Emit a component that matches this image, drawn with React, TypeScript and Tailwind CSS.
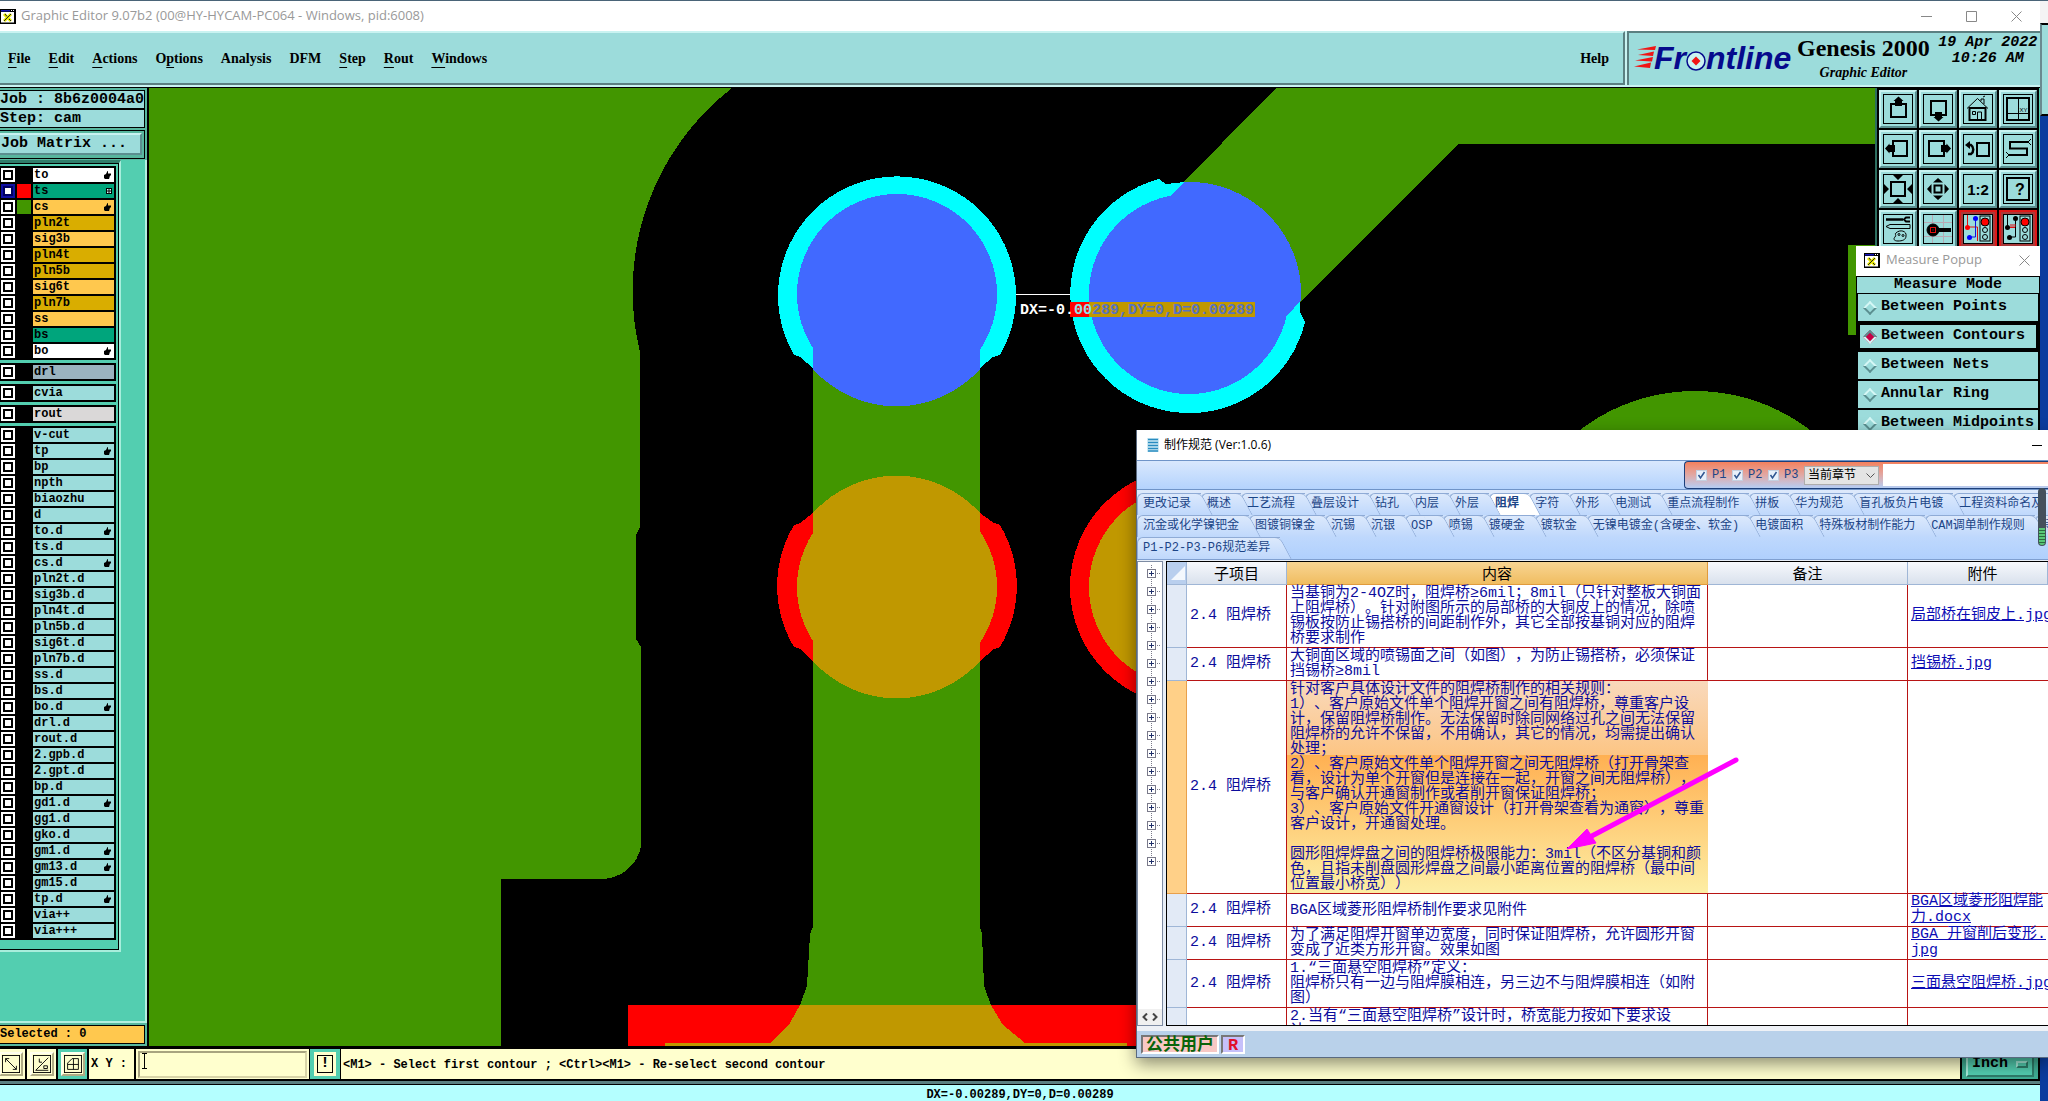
import { useState, type ReactNode } from "react"
import clsx from "clsx"

interface Layer {
  name: string
  bg?: string
  swatch?: string
  mark?: "hand" | "grid"
}

const WHITE = "bg-white"
const SOLDER = "bg-[#00a57c]"
const SIGNAL = "bg-[#ffc84e]"
const POWER = "bg-[#d9ad00]"

const LAYER_GROUPS: Layer[][] = [
  [
    { name: "to", bg: WHITE, mark: "hand" },
    { name: "ts", bg: SOLDER, swatch: "bg-[#ff0000]", mark: "grid" },
    { name: "cs", bg: SIGNAL, swatch: "bg-[#429600]", mark: "hand" },
    { name: "pln2t", bg: POWER },
    { name: "sig3b", bg: SIGNAL },
    { name: "pln4t", bg: POWER },
    { name: "pln5b", bg: POWER },
    { name: "sig6t", bg: SIGNAL },
    { name: "pln7b", bg: POWER },
    { name: "ss", bg: SIGNAL },
    { name: "bs", bg: SOLDER },
    { name: "bo", bg: WHITE, mark: "hand" },
  ],
  [{ name: "drl", bg: "bg-[#9ab3bf]" }],
  [{ name: "cvia" }],
  [{ name: "rout", bg: "bg-[#dad8d8]" }],
  [
    { name: "v-cut" },
    { name: "tp", mark: "hand" },
    { name: "bp" },
    { name: "npth" },
    { name: "biaozhu" },
    { name: "d" },
    { name: "to.d", mark: "hand" },
    { name: "ts.d" },
    { name: "cs.d", mark: "hand" },
    { name: "pln2t.d" },
    { name: "sig3b.d" },
    { name: "pln4t.d" },
    { name: "pln5b.d" },
    { name: "sig6t.d" },
    { name: "pln7b.d" },
    { name: "ss.d" },
    { name: "bs.d" },
    { name: "bo.d", mark: "hand" },
    { name: "drl.d" },
    { name: "rout.d" },
    { name: "2.gpb.d" },
    { name: "2.gpt.d" },
    { name: "bp.d" },
    { name: "gd1.d", mark: "hand" },
    { name: "gg1.d" },
    { name: "gko.d" },
    { name: "gm1.d", mark: "hand" },
    { name: "gm13.d", mark: "hand" },
    { name: "gm15.d" },
    { name: "tp.d", mark: "hand" },
    { name: "via++" },
    { name: "via+++" },
  ],
]

// [before mnemonic, mnemonic, rest]
const MENUS: [string, string, string][] = [
  ["", "F", "ile"],
  ["", "E", "dit"],
  ["", "A", "ctions"],
  ["O", "p", "tions"],
  ["Analysis", "", ""],
  ["DFM", "", ""],
  ["", "S", "tep"],
  ["", "R", "out"],
  ["", "W", "indows"],
]

const MEASURE_MODES = [
  "Between Points",
  "Between Contours",
  "Between Nets",
  "Annular Ring",
  "Between Midpoints",
]

const TAB_ROWS = [
  ["更改记录", "概述", "工艺流程", "叠层设计", "钻孔", "内层", "外层", "阻焊", "字符", "外形", "电测试", "重点流程制作", "拼板", "华为规范", "盲孔板负片电镀", "工程资料命名及"],
  ["沉金或化学镍钯金", "图镀铜镍金", "沉锡", "沉银", "OSP", "喷锡", "镀硬金", "镀软金", "无镍电镀金(含硬金、软金)", "电镀面积", "特殊板材制作能力", "CAM调单制作规则", "特"],
  ["P1-P2-P3-P6规范差异"],
]

interface SpecRow {
  height: string
  lines: string[]
  files: string[]
  selected?: boolean
}

const SPEC_ROWS: SpecRow[] = [
  {
    height: "h-[63px]",
    lines: [
      "当基铜为2-4OZ时，阻焊桥≥6mil；8mil（只针对整板大铜面",
      "上阻焊桥）。针对附图所示的局部桥的大铜皮上的情况，除喷",
      "锡板按防止锡搭桥的间距制作外，其它全部按基铜对应的阻焊",
      "桥要求制作",
    ],
    files: ["局部桥在铜皮上.jpg"],
  },
  {
    height: "h-[33px]",
    lines: ["大铜面区域的喷锡面之间（如图），为防止锡搭桥，必须保证", "挡锡桥≥8mil"],
    files: ["挡锡桥.jpg"],
  },
  {
    height: "h-[213px]",
    selected: true,
    lines: [
      "针对客户具体设计文件的阻焊桥制作的相关规则：",
      "1）、客户原始文件单个阻焊开窗之间有阻焊桥，尊重客户设",
      "计，保留阻焊桥制作。无法保留时除同网络过孔之间无法保留",
      "阻焊桥的允许不保留，不用确认，其它的情况，均需提出确认",
      "处理；",
      "2）、客户原始文件单个阻焊开窗之间无阻焊桥（打开骨架查",
      "看，设计为单个开窗但是连接在一起，开窗之间无阻焊桥），",
      "与客户确认开通窗制作或者削开窗保证阻焊桥；",
      "3）、客户原始文件开通窗设计（打开骨架查看为通窗），尊重",
      "客户设计，开通窗处理。",
      "",
      "圆形阻焊焊盘之间的阻焊桥极限能力：3mil（不区分基铜和颜",
      "色，且指未削盘圆形焊盘之间最小距离位置的阻焊桥（最中间",
      "位置最小桥宽））",
    ],
    files: [],
  },
  { height: "h-[33px]", lines: ["BGA区域菱形阻焊桥制作要求见附件"], files: ["BGA区域菱形阻焊能", "力.docx"] },
  {
    height: "h-[33px]",
    lines: ["为了满足阻焊开窗单边宽度，同时保证阻焊桥，允许圆形开窗", "变成了近类方形开窗。效果如图"],
    files: ["BGA 开窗削后变形.", "jpg"],
  },
  {
    height: "h-[48px]",
    lines: ["1.“三面悬空阻焊桥”定义：", "阻焊桥只有一边与阻焊膜相连，另三边不与阻焊膜相连（如附", "图）"],
    files: ["三面悬空阻焊桥.jpg"],
  },
  { height: "h-[33px]", lines: ["2.当有“三面悬空阻焊桥”设计时，桥宽能力按如下要求设", "计："], files: [] },
]

const MONO = "font-['Liberation_Mono',monospace]"
const SERIF = "font-['Liberation_Serif',serif]"
const UI = "font-['Open_Sans','Noto_Sans_CJK_SC',sans-serif]"
const CJK = "font-['Liberation_Mono','Noto_Sans_CJK_SC',monospace] [text-spacing-trim:space-all]"

const BEVEL =
  "border-t-[#c9f3f1] border-l-[#c9f3f1] border-r-[#5b8f90] border-b-[#5b8f90]"

function XLogo() {
  return (
    <svg className="h-[15px] w-4 shrink-0" viewBox="0 0 16 15">
      <rect width="16" height="15" fill="#000" />
      <rect x="1" y="3" width="13" height="10.500" fill="#fff" />
      <rect x="1" y="1" width="9" height="1.500" fill="#1414b4" />
      <path d="M11 1.500h1M13 1.500h1" stroke="#fff" />
      <path d="M4 5l7 7M11 5l-7 7" stroke="#e8e800" strokeWidth="3" />
      <path d="M11 5l-7 7M5 5l2 2.500M9 10l2 2" stroke="#222" />
    </svg>
  )
}

function FrontlineLogo() {
  return (
    <svg className="h-9 w-[162px] shrink-0" viewBox="0 0 162 36" role="img" aria-label="Frontline">
      <path
        d="M4 8.500L23 5L22 9zM5 14L21 10.500L20 15zM2 19.500L20 16L19 20.500zM1 25.500L18 21.500L17 27z"
        fill="#f01414"
      />
      <g fill="#060a8c" fontFamily="'Liberation Sans', sans-serif" fontWeight="700" fontStyle="italic" fontSize="32">
        <text x="21" y="28">Fr</text>
        <text x="73" y="28">ntline</text>
      </g>
      <circle cx="63" cy="20" r="9" fill="#c9f3f1" stroke="#060a8c" strokeWidth="1.500" />
      <path d="M63 15.500l4.500 4.500-4.500 4.500-4.500-4.500z" fill="#f01414" />
    </svg>
  )
}

function MenuBar() {
  return (
    <header className="flex h-[57px] shrink-0 border-b border-black bg-[#c9f3f1]">
      <nav
        className={`${SERIF} mr-[2px] flex h-[54px] flex-1 items-center border-t-2 border-r-2 border-b-2 border-t-[#c9f3f1] border-r-[#5b8081] border-b-[#5b8081] bg-[#9cdcdb] pt-0.5 pr-[5px] text-[14px] font-bold`}
      >
        {MENUS.map(([a, m, b]) => (
          <button key={a + m + b} className="px-[9px] leading-5 first:pl-2">
            {a}
            <span className="underline underline-offset-4">{m}</span>
            {b}
          </button>
        ))}
        <button className="ml-auto px-[9px] leading-5">Help</button>
      </nav>
      <div className="flex h-[54px] w-[413px] border-t-2 border-l-2 border-[#5b8081] bg-[#9cdcdb] pl-1">
        <div className="pt-2">
          <FrontlineLogo />
        </div>
        <div className={`${SERIF} flex flex-col items-center pl-0.5 font-bold`}>
          <span className="text-2xl leading-[30px]">Genesis 2000</span>
          <span className="text-[14px] leading-5 italic">Graphic Editor</span>
        </div>
        <div className={`${MONO} flex-1 pt-0.5 pl-1.5 text-center text-[15px] leading-4 font-bold whitespace-nowrap italic`}>
          19 Apr 2022
          <br />
          10:26 AM
        </div>
      </div>
    </header>
  )
}

function LayerMark({ kind }: { kind: "hand" | "grid" }) {
  if (kind === "grid") {
    return (
      <svg className="size-[6px]" viewBox="0 0 6 6">
        <rect width="6" height="6" fill="#000" />
        <path d="M1 1h1.500v1.500H1zM3.500 1H5v1.500H3.500zM1 3.500h1.500V5H1zM3.500 3.500H5V5H3.500z" fill="#dff" />
      </svg>
    )
  }
  return (
    <svg className="h-2 w-[9px]" viewBox="0 0 9 8">
      <path d="M1 4l2-1 1.500-3L5 0v2.500h3v2H7v1H6.500v1L6 8H2L1 7z" />
    </svg>
  )
}

function LayerRow({ layer, active, onToggle }: { layer: Layer; active: boolean; onToggle: () => void }) {
  return (
    <label className="flex h-[14px] items-stretch gap-0.5 pl-px">
      <input
        type="checkbox"
        checked={active}
        onChange={onToggle}
        className="size-[14px] shrink-0 appearance-none border-2 border-white bg-white shadow-[inset_0_0_0_2px_#000] checked:border-[#1010a4] checked:shadow-[inset_0_0_0_2px_#000060]"
      />
      <span className={clsx("w-[14px] shrink-0", layer.swatch)} />
      <span className={clsx("flex w-[81px] items-center justify-between pr-0.5 pl-px leading-[14px]", layer.bg ?? "bg-[#9cdcdb]")}>
        {layer.name}
        {layer.mark && <LayerMark kind={layer.mark} />}
      </span>
    </label>
  )
}

function LayerPanel() {
  const [active, setActive] = useState("ts")

  return (
    <aside className={`${MONO} flex w-[149px] shrink-0 flex-col border-r-2 border-black bg-[#53ceb0] font-bold whitespace-nowrap`}>
      <div className="bg-[#58b79f] pt-0.5 pr-0.5 text-[15px]">
        <div className="h-[19px] border border-l-0 border-black bg-[#9cdcdb] leading-[18px]">Job : 8b6z0004a0</div>
        <div className="h-[19px] border border-l-0 border-black bg-[#9cdcdb] leading-[18px]">Step: cam</div>
        <div className="mt-0.5 mb-px border border-l-0 border-black py-0.5 pr-0.5">
          <button className={`${BEVEL} h-[22px] w-full border-2 border-l-0 bg-[#9cdcdb] pl-px text-left leading-[18px]`}>
            Job Matrix ...
          </button>
        </div>
      </div>
      <div className="flex flex-1 flex-col border-r-2 border-[#b4f0e0]">
        <div className="mr-6 border-t-[3px] border-r-2 border-b-2 border-t-[#2f7d6a] border-r-[#a8eedc] border-b-[#a8eedc]">
          <div className="flex flex-col gap-[3px] border-t border-r border-b border-black pt-0.5 pr-0.5 pb-[9px] text-[12px]">
            {LAYER_GROUPS.map((group) => (
              <div key={group[0].name} className="flex flex-col gap-0.5 bg-black py-0.5">
                {group.map((layer) => (
                  <LayerRow
                    key={layer.name}
                    layer={layer}
                    active={layer.name === active}
                    onToggle={() => setActive(layer.name)}
                  />
                ))}
              </div>
            ))}
          </div>
        </div>
      </div>
      <div className="border-t-2 border-[#b4f0e0] bg-[#58b79f] py-0.5 pr-0.5">
        <div className="h-[19px] border border-l-0 border-black bg-[#ffc84e] text-[12px] leading-[17px]">Selected : 0</div>
      </div>
    </aside>
  )
}

function BoardCanvas() {
  return (
    <div className="min-w-0 flex-1 bg-black">
      <svg className="h-full w-full" viewBox="149 88 1726 958" preserveAspectRatio="xMinYMin slice" shapeRendering="crispEdges">
        {/* copper */}
        <g fill="#429600">
          <path d="M149 88H732A257 257 0 0 0 640 352V527L636 535V639L641 647V846C638 864 622 879 601 879H501V1046H149Z" />
          <path d="M813 294H980V927L982 934L984 986L991 1005L1003 1025L1025 1043V1046H771V1043L790 1023L800 1005L807 986L810 934L813 927Z" />
          <path d="M1170 196L1276 88H1875V144H1458L1288 315L1189 294Z" />
          <circle cx="1695" cy="580" r="189" />
          <rect x="1848" y="245" width="27" height="90" />
        </g>

        {/* solder mask over the lower plane */}
        <rect x="628" y="1005" width="600" height="41" fill="#ff0000" />
        <path d="M800 1005H991L1003 1025L1025 1043H1127V1046H665V1043H771L790 1023Z" fill="#c09800" />

        {/* selected pads */}
        <path d="M794 355A119 119 0 1 1 1000 355L993 357L980 368H813L800 357Z" fill="#00ffff" />
        <circle cx="897" cy="294" r="100" fill="#4169ff" />
        <path d="M813 294V369A112 112 0 0 0 980 369V294Z" fill="#4169ff" />
        <path d="M1159 179A119 119 0 1 0 1305 322L1300 312V300L1189 294L1184 182L1166 184Z" fill="#00ffff" />
        <circle cx="1189" cy="294" r="100" fill="#4169ff" />
        <path d="M1170 196L1184 182A112 112 0 0 1 1301 300L1288 315L1189 294Z" fill="#4169ff" />

        {/* unselected pads */}
        <path d="M794 525A119 119 0 0 0 794 647L800 649L813 661H980L994 649L1000 647A119 119 0 0 0 1000 525L994 523L980 513H813L800 523Z" fill="#ff0000" />
        <circle cx="897" cy="587" r="100" fill="#c09800" />
        <path d="M813 513A112 112 0 0 1 980 513V661A112 112 0 0 1 813 661Z" fill="#c09800" />
        <circle cx="1189" cy="587" r="119" fill="#ff0000" />
        <circle cx="1189" cy="587" r="100" fill="#c09800" />

        {/* measurement */}
        <path d="M1016 294.500H1070" stroke="#fff" />
        <rect x="1070" y="302" width="19" height="15" fill="#ff0000" />
        <rect x="1089" y="302" width="166" height="15" fill="#c09800" />
        <text x="1020" y="314" fontFamily="'Liberation Mono', monospace" fontWeight="700" fontSize="15" fill="#fff">
          DX=-0.<tspan fill="#8fe0e8">00</tspan>
          <tspan fill="#5873c0">289,DY=0,D=0.00289</tspan>
        </text>
      </svg>
    </div>
  )
}

const TOOLS: { name: string; alert?: boolean; art: ReactNode }[] = [
  {
    name: "Pan up",
    art: (
      <>
        <rect x="8" y="10" width="15" height="13" strokeWidth="2" />
        <path d="M15.500 2.500l5 4.500H19v5h-7V7h-1.500z" fill="#000" stroke="none" />
      </>
    ),
  },
  {
    name: "Pan down",
    art: (
      <>
        <rect x="8" y="7" width="15" height="14" strokeWidth="2" />
        <path d="M12 18h7v5h1.500l-5 4.500-5-4.500H12z" fill="#000" stroke="none" />
      </>
    ),
  },
  {
    name: "Home",
    art: (
      <>
        <path d="M4 14.500L14.500 4.500L25 14.500M18 7V5h3v5M20 3l2-1" />
        <rect x="6.500" y="14" width="16" height="12" strokeWidth="2" />
        <path d="M9.500 17.500h3v3h-3zM14.500 26v-8h4v8" />
      </>
    ),
  },
  {
    name: "Window XY",
    art: (
      <>
        <rect x="4" y="4" width="22" height="22" strokeWidth="2" />
        <path d="M15.500 4v22M4 19.500h22" />
        <text x="16.500" y="18" fontSize="6" fill="#000" stroke="none" fontFamily="'Liberation Sans', sans-serif">XY</text>
      </>
    ),
  },
  {
    name: "Pan left",
    art: (
      <>
        <rect x="10" y="7" width="14" height="15" strokeWidth="2" />
        <path d="M2 14.500l4.500-5V11H12v7H6.500v1.500z" fill="#000" stroke="none" />
      </>
    ),
  },
  {
    name: "Pan right",
    art: (
      <>
        <rect x="6" y="7" width="15" height="15" strokeWidth="2" />
        <path d="M28 14.500l-4.500-5V11H18v7h5.500v1.500z" fill="#000" stroke="none" />
      </>
    ),
  },
  {
    name: "Previous view",
    art: (
      <>
        <rect x="14" y="9" width="12" height="13" strokeWidth="2" />
        <path d="M5 11h3c3 2 3 7 0 9H5" strokeWidth="2.500" />
        <path d="M2 11l5-4v8z" fill="#000" stroke="none" />
      </>
    ),
  },
  {
    name: "Serpentine",
    art: (
      <>
        <path d="M25 8H7v6.500h17V21H6" strokeWidth="2" />
        <path d="M25 8l3-3M25 8l3 3M6 21l-3-3M6 21l-3 3" />
      </>
    ),
  },
  {
    name: "Zoom in",
    art: (
      <>
        <rect x="8" y="8" width="14" height="14" strokeWidth="2" />
        <path d="M10 1h10l-5 5zM10 29h10l-5-5zM1 10v10l5-5zM29 10v10l-5-5z" fill="#000" stroke="none" />
      </>
    ),
  },
  {
    name: "Zoom out",
    art: (
      <>
        <rect x="11.500" y="11.500" width="7" height="7" strokeWidth="2" />
        <path d="M10 8.500h10L15 4zM10 21.500h10L15 26zM8.500 10v10L4 15zM21.500 10v10l4.500-5z" fill="#000" stroke="none" />
      </>
    ),
  },
  {
    name: "Zoom 1:2",
    art: (
      <text x="15" y="21" textAnchor="middle" fontSize="15" fontWeight="700" fill="#000" stroke="none" fontFamily="'Liberation Sans', sans-serif">
        1:2
      </text>
    ),
  },
  {
    name: "Query",
    art: (
      <>
        <rect x="4" y="4" width="22" height="22" strokeWidth="2" />
        <text x="17" y="21" textAnchor="middle" fontSize="16" fontWeight="700" fill="#000" stroke="none" fontFamily="'Liberation Sans', sans-serif">
          ?
        </text>
      </>
    ),
  },
  {
    name: "Tools",
    art: (
      <>
        <path d="M3 5.500h17" strokeWidth="2.500" />
        <path d="M27 3.500h-4l-2 2 2 2h4" strokeWidth="2" />
        <path d="M3 12.500l4-2h20v4H7z" />
        <path d="M13 19c4-4 11-2 10 3 0 4-4 5-8 5s-5-2-3-4-1-3 1-4z" />
        <circle cx="16" cy="20.500" r="1" />
        <circle cx="20" cy="21.500" r="1" />
      </>
    ),
  },
  {
    name: "Measure",
    art: (
      <>
        <path d="M9.500 1v28M20.500 1v28M1 8.500h28M1 22.500h28" stroke="#b9a9b4" />
        <circle cx="10" cy="16" r="6" fill="#000" />
        <rect x="7.500" y="13.500" width="5" height="5" stroke="#e01010" />
        <path d="M10 15.500v1" stroke="#e01010" />
        <path d="M15 16h13" strokeWidth="4" />
      </>
    ),
  },
  {
    name: "Online DRC",
    alert: true,
    art: (
      <>
        <path d="M4.500 1v12h10v14" stroke="#e01010" />
        <path d="M12.500 4v19H7" stroke="#1010e0" />
        <circle cx="4.500" cy="13.500" r="2.500" fill="#f00" stroke="none" />
        <circle cx="12.500" cy="4.500" r="2.500" fill="#00f" stroke="none" />
        <circle cx="6.500" cy="23.500" r="2.500" fill="#00f" stroke="none" />
        <rect x="17" y="2" width="10" height="25" />
        <circle cx="22" cy="8" r="4" fill="#f00" />
        <circle cx="22" cy="16" r="2.500" />
        <circle cx="22" cy="23" r="2.500" />
      </>
    ),
  },
  {
    name: "Net check",
    alert: true,
    art: (
      <>
        <path d="M4.500 1v12M12.500 4v19H7" />
        <path d="M6 13.500h6M8 13v-3M10 13v-3M12 13v-3" stroke="#e01010" />
        <circle cx="4.500" cy="13.500" r="2.500" fill="#000" stroke="none" />
        <circle cx="12.500" cy="4.500" r="2.500" fill="#000" stroke="none" />
        <circle cx="6.500" cy="23.500" r="2.500" fill="#000" stroke="none" />
        <rect x="17" y="2" width="10" height="25" />
        <circle cx="22" cy="8" r="4" fill="#f00" />
        <circle cx="22" cy="16" r="2.500" />
        <circle cx="22" cy="23" r="2.500" />
      </>
    ),
  },
]

function ToolPanel() {
  return (
    <aside className="w-[165px] shrink-0 border-l-2 border-[#2c6f60] bg-[#53ceb0]">
      <div className="grid w-[162px] grid-cols-4 gap-0.5 bg-black p-0.5">
        {TOOLS.map((tool) => (
          <button
            key={tool.name}
            aria-label={tool.name}
            className={clsx(
              "size-[38px] border-2 p-0.5",
              tool.alert ? "border-[#e01818] bg-[#a93a3a]" : `${BEVEL} bg-[#9cdcdb]`
            )}
          >
            <svg className="size-[30px] bg-[#9cdcdb]" viewBox="0 0 30 30" fill="none" stroke="#000">
              <rect x="0.500" y="0.500" width="29" height="29" />
              {tool.art}
            </svg>
          </button>
        ))}
      </div>
    </aside>
  )
}

function MeasurePopup() {
  const [mode, setMode] = useState("Between Contours")

  return (
    <section className="absolute top-[246px] right-2 w-[184px] bg-black">
      <div className={`${UI} flex h-[30px] items-center gap-1.5 bg-white pr-2.5 pb-0.5 pl-2 text-[13px] text-[#999]`}>
        <XLogo />
        <span className="flex-1">Measure Popup</span>
        <button aria-label="Close popup">
          <svg className="size-[11px]" viewBox="0 0 11 11" stroke="#888">
            <path d="M0.500 0.500l10 10M10.500 0.500l-10 10" />
          </svg>
        </button>
      </div>
      <fieldset className={`${MONO} text-[15px] font-bold`}>
        <legend className="w-full border border-black bg-[#9cdcdb] text-center leading-4">Measure Mode</legend>
        <div className="flex flex-col gap-0.5 px-0.5">
          {MEASURE_MODES.map((item) => (
            <label
              key={item}
              className={clsx(
                "flex h-[27px] items-center gap-1.5 bg-[#9cdcdb] pl-[7px] whitespace-nowrap",
                item === mode && "shadow-[inset_0_0_0_2px_#000]"
              )}
            >
              <input
                type="radio"
                name="measure-mode"
                checked={item === mode}
                onChange={() => setMode(item)}
                className="size-[10px] shrink-0 rotate-45 appearance-none border-2 border-t-[#d5f7f5] border-r-[#5b8f90] border-b-[#5b8f90] border-l-[#d5f7f5] checked:border-t-[#5b8f90] checked:border-r-[#d5f7f5] checked:border-b-[#d5f7f5] checked:border-l-[#5b8f90] checked:bg-[#c80046]"
              />
              {item}
            </label>
          ))}
        </div>
      </fieldset>
    </section>
  )
}

function SpecTabs() {
  const [current, setCurrent] = useState("阻焊")

  return (
    <div className={`${CJK} overflow-hidden border-b border-[#7f9fd0] bg-linear-to-b from-[#dde9fb] to-[#b0d0fd] pt-[3px] text-[12px] text-[#1c4587]`} role="tablist">
      {TAB_ROWS.map((row) => (
        <div key={row[0]} className="flex h-[22px]">
          {row.map((tab, i) => (
            <button
              key={tab}
              role="tab"
              aria-selected={tab === current}
              onClick={() => setCurrent(tab)}
              style={{ zIndex: row.length - i }}
              className={clsx(
                "relative isolate shrink-0 rounded-tl-md border-t border-l border-[#8fabd6] bg-linear-to-b pr-[10px] pl-[5px] leading-[19px]",
                "after:absolute after:-top-px after:-right-1.5 after:bottom-0 after:-z-10 after:w-5 after:skew-x-[28deg] after:rounded-tr-md after:border-t after:border-r after:border-[#8fabd6] after:bg-linear-to-b",
                tab === current
                  ? "from-white to-white font-bold after:from-white after:to-white"
                  : "from-[#dce9fc] to-[#bfd8fc] after:from-[#dce9fc] after:to-[#bfd8fc]"
              )}
            >
              {tab}
            </button>
          ))}
        </div>
      ))}
    </div>
  )
}

function SpecToolbar() {
  return (
    <div className="flex h-[30px] justify-end border-y border-[#6f94c8] bg-linear-to-b from-[#d9e8fd] to-[#b4d3fd]">
      <div className={`${CJK} flex w-[364px] items-center rounded-l border border-r-0 border-[#1d3f7a] bg-linear-to-b from-[#f4805c] via-[#e0a8a4] to-[#b4cdf4] pl-[11px] text-[12px] text-[#1c4587]`}>
        {["P1", "P2", "P3"].map((p) => (
          <label key={p} className="flex w-9 items-center gap-[5px]">
            <input type="checkbox" defaultChecked className="peer sr-only" />
            <svg className="size-[11px]" viewBox="0 0 11 11">
              <rect x="0.500" y="0.500" width="10" height="10" fill="#e8f0fa" stroke="#c4d0e0" />
              <path d="M2.500 5l2 3 4-6" fill="none" stroke="#2f5590" strokeWidth="1.500" />
            </svg>
            {p}
          </label>
        ))}
        <div className="relative">
          <select
            aria-label="搜索范围"
            className="h-[19px] w-[75px] appearance-none border border-[#adadad] bg-[#e4e4e4] pl-[3px] text-[12px] text-black"
          >
            <option>当前章节</option>
          </select>
          <svg className="pointer-events-none absolute top-[7px] right-1 h-[5px] w-[9px]" viewBox="0 0 9 5" fill="none" stroke="#555">
            <path d="M0.500 0.500l4 4 4-4" />
          </svg>
        </div>
        <input aria-label="搜索" className="ml-1 h-[22px] min-w-0 flex-1 bg-white px-1" />
      </div>
    </div>
  )
}

function SpecTree() {
  return (
    <div className="flex w-[26px] shrink-0 flex-col border border-[#7d8ba3] bg-white">
      <ul className="flex-1 pt-[3px]">
        {Array.from({ length: 17 }, (_, i) => (
          <li key={i} className="h-[18px] pl-[9px]">
            <button aria-label={`展开 ${i + 1}`} className="block">
              <svg className="h-[18px] w-[14px]" viewBox="0 0 14 18" fill="none" stroke="#7a7a8a">
                <path d={i === 16 ? "M4.500 0v4" : "M4.500 0v4M4.500 14v4"} strokeDasharray="1 1" />
                <rect x="0.500" y="4.500" width="8" height="8" />
                <path d="M2 8.500h5M4.500 6v5" stroke="#20306a" />
                <path d="M10 8.500h4" strokeDasharray="1 1" />
              </svg>
            </button>
          </li>
        ))}
      </ul>
      <div className="flex h-4 items-center justify-between bg-[#f0f0f0] px-1">
        <svg className="h-2 w-[6px]" viewBox="0 0 6 8" fill="none" stroke="#444" strokeWidth="2">
          <path d="M5 0.500L1.500 4L5 7.500" />
        </svg>
        <svg className="h-2 w-[6px]" viewBox="0 0 6 8" fill="none" stroke="#444" strokeWidth="2">
          <path d="M1 0.500L4.500 4L1 7.500" />
        </svg>
      </div>
    </div>
  )
}

const HEAD = "border-r border-b border-[#9fb6d6] bg-linear-to-b from-[#f7f9fc] to-[#d9e1ed] pt-1 leading-[15px] font-normal"
const CELL = "border-r border-b border-[#b81414] p-0"

function SpecTable() {
  return (
    <div className="min-w-0 flex-1 overflow-hidden border-t border-b border-l border-black bg-white">
      <table className="w-full table-fixed border-separate border-spacing-0 text-[15px] whitespace-nowrap text-[#0c0c9c]">
        <colgroup>
          <col className="w-5" />
          <col className="w-[100px]" />
          <col className="w-[421px]" />
          <col className="w-[200px]" />
          <col />
        </colgroup>
        <thead>
          <tr className="h-[23px] text-black">
            <th className="border-r border-b border-[#9fb6d6] bg-[#b9cfee] p-0">
              <svg className="ml-auto h-[18px] w-4" viewBox="0 0 16 18">
                <path d="M15 2v14H1z" fill="#f4f8fd" />
              </svg>
            </th>
            <th className={HEAD}>子项目</th>
            <th className="border-r border-b border-[#e09a3c] bg-linear-to-b from-[#f8d592] to-[#f0bd60] pt-1 leading-[15px] font-normal">内容</th>
            <th className={HEAD}>备注</th>
            <th className={`${HEAD} pl-2.5`}>附件</th>
          </tr>
        </thead>
        <tbody>
          {SPEC_ROWS.map((row, i) => (
            <tr key={i} className={row.height}>
              <td
                className={clsx(
                  "border-r border-b p-0",
                  row.selected ? "border-[#e8a04c] bg-[#ffd088]" : "border-[#9fb6d6] bg-[#e2eaf6]"
                )}
              />
              <td className={CELL}>
                <div className="pl-[3px] leading-5">{i < 6 && "2.4 阻焊桥"}</div>
              </td>
              <td
                className={clsx(
                  "border-b p-0",
                  row.selected
                    ? "border-[#b81414] bg-[linear-gradient(#f9d9bc,#fcc584_35%,#ffb052_35%,#fdeea4)]"
                    : "border-r border-[#b81414]"
                )}
              >
                <div className="pl-[3px]">
                  {row.lines.map((line, n) => (
                    <div key={n} className="h-[15px] leading-[15px]">{line}</div>
                  ))}
                </div>
              </td>
              <td className={CELL} />
              <td className="border-b border-[#b81414] p-0">
                {row.files.length > 0 && (
                  <a href="#" className="block pl-[3px] leading-4 text-[#0c0cb4] underline">
                    {row.files.map((part) => (
                      <span key={part} className="block">{part}</span>
                    ))}
                  </a>
                )}
              </td>
            </tr>
          ))}
        </tbody>
      </table>
    </div>
  )
}

function SpecWindow() {
  return (
    <section className="absolute top-[430px] right-0 left-[1136px] flex h-[628px] flex-col border-b border-l border-[#5a6a80] bg-white shadow-[0_6px_16px_rgba(0,0,0,0.45)]">
      <div className={`${UI} flex h-[30px] shrink-0 items-center gap-[5px] pr-1 pl-2.5 text-[12px] text-black`}>
        <svg className="h-[14px] w-3" viewBox="0 0 12 14">
          <rect width="12" height="14" fill="#cdeaf5" />
          <path d="M1 1.500h10M1 4.500h10M1 7.500h10M1 10.500h10M1 13h10" stroke="#2a8cc0" strokeWidth="1.500" />
        </svg>
        <span className="flex-1">制作规范 (Ver:1.0.6)</span>
        <button aria-label="最小化" className="flex h-4 w-3 items-center">
          <span className="h-px w-2.5 bg-black" />
        </button>
      </div>
      <SpecToolbar />
      <SpecTabs />
      <div className={`${CJK} flex min-h-0 flex-1 gap-[3px] bg-[#e8eef6] pt-px`}>
        <SpecTree />
        <SpecTable />
      </div>
      <footer className={`${CJK} flex h-[31px] shrink-0 items-center gap-0.5 border-t-[5px] border-[#eef1f6] bg-[#b9d1ea] pl-1 text-[17px] font-bold`}>
        <span className="h-[19px] border-2 border-t-[#777] border-r-white border-b-white border-l-[#777] bg-[#f8c8c4] px-[3px] leading-[17px] text-[#0a640a]">
          公共用户
        </span>
        <span className="h-[19px] border-2 border-t-[#777] border-r-white border-b-white border-l-[#777] bg-[#c6c0fa] px-[5px] leading-[17px] text-[#e0102a]">
          R
        </span>
      </footer>

      {/* battery-like floating gauge */}
      <div className="absolute top-[58px] right-0.5 z-30 flex h-[58px] w-2 flex-col justify-end rounded bg-[#44505c] p-px">
        <div className="h-[17px] rounded-b bg-[repeating-linear-gradient(#58c878_0_2px,#2c6a40_2px_3px)]" />
      </div>

      <svg className="pointer-events-none absolute top-[324px] left-[423px] h-[100px] w-[184px]" viewBox="1560 754 184 100" fill="#ff00ff">
        <path d="M1736 760L1588 838" stroke="#ff00ff" strokeWidth="5" strokeLinecap="round" />
        <path d="M1567 849L1587 829L1596 843Z" stroke="#ff00ff" strokeLinejoin="round" />
      </svg>
    </section>
  )
}

function BarButton({ label, active, children }: { label: string; active?: boolean; children: ReactNode }) {
  return (
    <button
      aria-label={label}
      className={clsx("flex w-[31px] items-center justify-center border-r-2 border-black", active && "bg-[#53ceb0]")}
    >
      <span className="border-2 border-t-[#ffffee] border-r-[#b0ac84] border-b-[#b0ac84] border-l-[#ffffee] bg-[#ffffce] p-px">
        <svg className="size-[18px]" viewBox="0 0 20 20" fill="none" stroke="#000">
          <rect x="0.500" y="0.500" width="19" height="19" />
          {children}
        </svg>
      </span>
    </button>
  )
}

function CommandBar() {
  return (
    <div className={`${MONO} flex h-[35px] shrink-0 border-t-[3px] border-b-2 border-black bg-[#ffffce] text-[12px] font-bold`}>
      <div className="-ml-1 flex">
        <BarButton label="Snap">
          <path d="M4 4l12 12M4 8V4h4M12 16h4v-4" />
        </BarButton>
        <BarButton label="Angle">
          <path d="M3 17L17 3M3 17h14M7 4v4h3M12 12h4v3h-4z" />
        </BarButton>
        <BarButton label="Grid" active>
          <path d="M4 16V9l5-5h7v12zM4 10.500h12M10.500 4v12" />
        </BarButton>
      </div>
      <label className="flex items-center">
        <span className="w-[45px] pl-0.5 whitespace-nowrap">X Y :</span>
        <span className="relative flex h-full items-center border-l-2 border-black px-0.5">
          <input className="h-[27px] w-[169px] border-2 border-t-[#a8a480] border-r-[#d8d4a8] border-b-[#d8d4a8] border-l-[#a8a480] bg-[#ffffce] px-1 outline-none" />
          <svg className="pointer-events-none absolute top-1 left-1.5 h-4 w-[5px]" viewBox="0 0 5 16" stroke="#000">
            <path d="M0 0.500h5M2.500 0v16M0 15.500h5" />
          </svg>
        </span>
      </label>
      <button aria-label="Alert" className="flex w-8 items-center justify-center border-x border-black bg-[#53ceb0]">
        <span className="bg-[#ffffce] p-[3px]">
          <span className="block h-[18px] w-4 border border-black text-[15px] leading-4">!</span>
        </span>
      </button>
      <span className="flex-1 self-center pt-px pl-0.5 whitespace-nowrap">
        &lt;M1&gt; - Select first contour ; &lt;Ctrl&gt;&lt;M1&gt; - Re-select second contour
      </span>
      <div className="flex w-20 items-center border-x-2 border-black bg-[#3fae94] px-1">
        <button className="flex h-[26px] w-full items-center justify-between border-2 border-t-[#a8eedc] border-r-[#2f7d6a] border-b-[#2f7d6a] border-l-[#a8eedc] bg-[#53ceb0] px-1 text-[15px]">
          Inch
          <span className="h-[7px] w-3 border-2 border-t-[#a8eedc] border-r-[#2f7d6a] border-b-[#2f7d6a] border-l-[#a8eedc]" />
        </button>
      </div>
    </div>
  )
}

export default function App() {
  return (
    <div className="relative flex h-screen overflow-hidden bg-[#0a3c9e] text-black">
      <div className="flex min-w-0 flex-1 flex-col border-t border-[#4a6478]">
        <div className={`${UI} flex h-[30px] shrink-0 items-center bg-white text-[13px] text-[#999]`}>
          <XLogo />
          <h1 className="flex-1 pl-[5px]">Graphic Editor 9.07b2 (00@HY-HYCAM-PC064 - Windows, pid:6008)</h1>
          <div className="flex gap-[34px] pr-[18px]">
            {["M0 5.500h11", "M0.500 0.500h10v10h-10z", "M0.500 0.500l10 10M10.500 0.500l-10 10"].map((d, i) => (
              <button key={d} aria-label={["Minimize", "Maximize", "Close"][i]}>
                <svg className="size-[11px]" viewBox="0 0 11 11" fill="none" stroke="#888">
                  <path d={d} />
                </svg>
              </button>
            ))}
          </div>
        </div>
        <MenuBar />
        <main className="flex min-h-0 flex-1">
          <LayerPanel />
          <BoardCanvas />
          <ToolPanel />
        </main>
        <CommandBar />
        <div className={`${MONO} h-5 shrink-0 border-t-[3px] border-[#5b8081] bg-[#b4ffff] text-center text-[12px] font-bold`}>
          <div className="border-t border-black pt-1 leading-3">DX=-0.00289,DY=0,D=0.00289</div>
        </div>
      </div>
      <div className="w-2 shrink-0">
        <div className="h-[23px] border-t border-[#4a6478] bg-[#f4f4f4]" />
        <div className="h-[93px] border-y-2 border-l-2 border-y-black border-l-[#6a8a90] bg-[#9cdcdb]" />
      </div>
      <MeasurePopup />
      <SpecWindow />
    </div>
  )
}
